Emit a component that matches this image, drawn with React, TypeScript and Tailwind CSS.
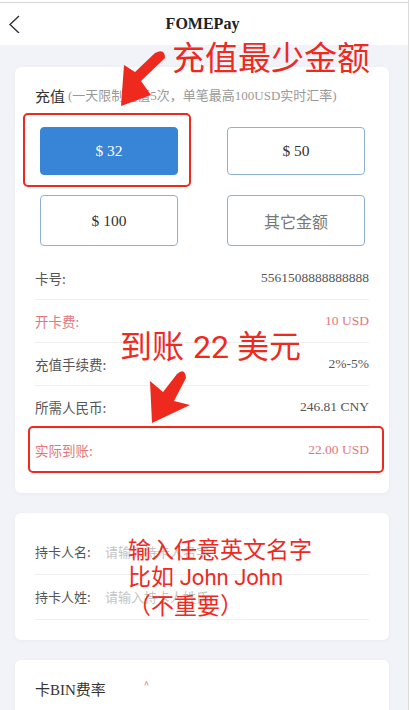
import React from "react";

const serif = { fontFamily: '"Liberation Serif", "Noto Sans CJK SC", serif' };
const cjk = { fontFamily: '"Noto Sans CJK SC", "Noto Sans", sans-serif' };
const mark = { fontFamily: 'Roboto, "Noto Sans CJK SC", sans-serif' };

type Row = { label: string; value: string; tone?: "red" };

const rows: Row[] = [
  { label: "卡号:", value: "5561508888888888" },
  { label: "开卡费:", value: "10 USD", tone: "red" },
  { label: "充值手续费:", value: "2%-5%" },
  { label: "所需人民币:", value: "246.81 CNY" },
  { label: "实际到账:", value: "22.00 USD", tone: "red" },
];

function AmountButton({ text, active, muted, tall }: { text: string; active?: boolean; muted?: boolean; tall?: boolean }) {
  return (
    <div
      className={
        (tall ? "h-[51px] " : "h-[48px] ") +
        (active
          ? "bg-[#3884d6] text-white border border-[#3884d6] "
          : "bg-white border-[1.5px] border-[#8db1d8] " + (muted ? "text-[#777] " : "text-[#333] ")) +
        "rounded-[4px] flex items-center justify-center"
      }
    >
      <span className={muted ? "text-[16px]" : "text-[15.5px]"} style={muted ? cjk : serif}>
        {text}
      </span>
    </div>
  );
}

export default function App() {
  return (
    <div className="relative w-[410px] h-[710px] overflow-hidden bg-white" style={serif}>
      <div className="w-[409px] h-full border-r border-[#dadada] bg-[#f2f3f8] flex flex-col overflow-hidden">
        {/* top bar */}
        <div className="h-[2px] shrink-0 bg-white" />
        <div className="h-px shrink-0 bg-[#d6d6d6]" />
        <header className="h-[42px] shrink-0 bg-white flex items-center relative pr-[3px]">
          <svg className="absolute left-[8px] top-[12px]" width="14" height="18" viewBox="0 0 14 18">
            <polyline points="11,1 2,9.5 11,18" fill="none" stroke="#333" strokeWidth="1.4" />
          </svg>
          <div className="flex-1 text-center text-[16px] font-bold text-[#222]">FOMEPay</div>
        </header>

        <main className="shrink-0 pl-[15px] pr-[19px] pt-[22px] flex flex-col gap-[20px]">
          {/* recharge card */}
          <section className="bg-white rounded-[6px] shadow-[0_1px_4px_rgba(0,0,0,0.04)] px-[20px] pt-[19px] pb-[21px]">
            <div className="h-[20px] flex items-center text-[#333]">
              <span className="text-[15px]" style={cjk}>充值</span>
              <span className="text-[13px] text-[#999] ml-[3px]">(一天限制充值5次，单笔最高100USD实时汇率)</span>
            </div>
            <div className="mt-[21px] px-[5px] grid grid-cols-[138px_138px] gap-x-[49px] gap-y-[20px]">
              <AmountButton text="$ 32" active />
              <AmountButton text="$ 50" />
              <AmountButton text="$ 100" tall />
              <AmountButton text="其它金额" muted tall />
            </div>
            <div className="mt-[11px] flex flex-col">
              {rows.map((r, i) => (
                <div
                  key={r.label}
                  className={
                    "h-[43px] flex items-center justify-between " +
                    (i < rows.length - 1 ? "border-b border-[#f0f0f0] " : "") +
                    (r.tone === "red" ? "text-[#e3767b]" : "text-[#555]")
                  }
                >
                  <span className="text-[13.5px]" style={cjk}>{r.label}</span>
                  <span className="text-[13.5px]">{r.value}</span>
                </div>
              ))}
            </div>
          </section>

          {/* holder card */}
          <section className="bg-white rounded-[6px] shadow-[0_1px_4px_rgba(0,0,0,0.04)] px-[20px] pt-[17px] pb-[20px]">
            {[
              { label: "持卡人名:", ph: "请输入持卡人名字" },
              { label: "持卡人姓:", ph: "请输入持卡人姓氏" },
            ].map((f) => (
              <div key={f.label} className="h-[45px] flex items-center border-b border-[#f0f0f0]" style={cjk}>
                <span className="w-[70px] text-[13px] text-[#555]">{f.label}</span>
                <span className="text-[13px] text-[#c4c4c4]">{f.ph}</span>
              </div>
            ))}
          </section>

          {/* bin rate card */}
          <section className="bg-white rounded-[6px] shadow-[0_1px_4px_rgba(0,0,0,0.04)] px-[20px] pt-[20px] h-[80px]">
            <div className="h-[20px] flex items-center">
              <span className="text-[15px] text-[#333]">卡BIN费率</span>
              <span className="ml-[38px] -mt-[12px] text-[10px] text-[#e3767b]" style={cjk}>^</span>
            </div>
          </section>
        </main>
      </div>

      {/* red markup layer */}
      <div className="absolute left-[23px] top-[113px] w-[168px] h-[74px] border-[2.5px] border-[#ee2a1f] rounded-[5px] pointer-events-none" />
      <div className="absolute left-[28px] top-[426px] w-[356px] h-[47px] border-[2.5px] border-[#ee2a1f] rounded-[5px] pointer-events-none" />
      <svg className="absolute left-0 top-0 pointer-events-none" width="410" height="710" viewBox="0 0 410 710">
        <path d="M155 53 L135 72 L124 65 L121 106 L151 95 L141 81 L165 58 Q165 48 155 53 Z" fill="#ee2a1f" />
        <path d="M177 374 L163 392 L150 381 L152 423 L190 405 L174 401 L186 378 Q185 367 177 374 Z" fill="#ee2a1f" />
      </svg>
      <div className="absolute left-[172px] top-[40px] text-[33px] leading-none text-[#ee2a1f] whitespace-nowrap" style={cjk}>
        充值最少金额
      </div>
      <div className="absolute left-[120px] top-[331px] text-[32px] leading-none text-[#ee2a1f] whitespace-nowrap flex" style={mark}>
        <span>到账</span>
        <span className="ml-[9px]">22</span>
        <span className="ml-[8px]">美元</span>
      </div>
      <div className="absolute left-[128px] top-[537px] text-[23px] leading-[27px] text-[#ee2a1f] whitespace-nowrap" style={mark}>
        <div>输入任意英文名字</div>
        <div>
          比如 <span className="text-[22px]">John John</span>
        </div>
        <div style={cjk}>（不重要）</div>
      </div>
    </div>
  );
}
